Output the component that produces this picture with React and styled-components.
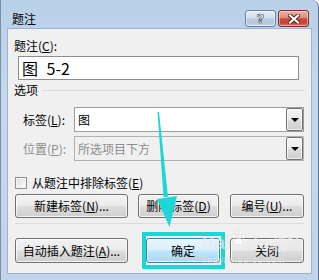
import React from 'react';
import styled, { createGlobalStyle } from 'styled-components';

const Global = createGlobalStyle`
  html, body { margin: 0; padding: 0; background: #ffffff; }
  body {
    font-family: "Noto Sans CJK SC", "Noto Sans", sans-serif;
    font-size: 12px;
    color: #000;
  }
  * { box-sizing: border-box; }
`;

const Window = styled.div`
  position: relative;
  width: 319px;
  height: 280px;
  display: flex;
  flex-direction: column;
  background: linear-gradient(180deg, #b9d0e9 0%, #c4d9ef 35%, #c0d5ec 100%);
  border-left: 1px solid #7c8ea4;
  border-right: 1px solid #5d718a;
  border-top-right-radius: 7px;
  overflow: hidden;
`;

const TitleBar = styled.div`
  height: 29px;
  flex: none;
  display: flex;
  align-items: flex-start;
  padding: 0 9px 0 11px;
`;

const Title = styled.div`
  margin-top: 11px;
  line-height: 16px;
  font-size: 12px;
`;

const Controls = styled.div`
  margin-left: auto;
  margin-top: 10px;
  display: flex;
  gap: 2px;
`;

const CaptionButton = styled.div`
  width: 31px;
  height: 17px;
  border-radius: 3px;
  display: flex;
  align-items: center;
  justify-content: center;
  border: 1px solid ${p => (p.$close ? '#7a2c25' : '#6f829d')};
  background: ${p =>
    p.$close
      ? 'linear-gradient(180deg, #eab0a3 0%, #dd8b7c 45%, #c8493c 52%, #c44236 80%, #d97769 100%)'
      : 'linear-gradient(180deg, #e6eef7 0%, #d2deed 45%, #bccde3 52%, #b4c7df 80%, #cbdaec 100%)'};
  box-shadow: inset 0 0 0 1px rgba(255, 255, 255, 0.45);
`;

const HelpGlyph = styled.span`
  font-family: "DejaVu Sans", sans-serif;
  font-weight: bold;
  font-size: 13px;
  line-height: 13px;
  color: #ffffff;
  -webkit-text-stroke: 0.7px #3f4e63;
`;

const Body = styled.div`
  flex: 1;
  margin: 0 7px 7px 7px;
  background: #f0f0f0;
  box-shadow: 0 0 0 1px #9fb4cc;
  display: flex;
  flex-direction: column;
`;

const Key = styled.span`
  text-decoration: underline;
  text-underline-offset: 1px;
`;

const CaptionLabel = styled.div`
  margin-top: 9px;
  padding-left: 6px;
  line-height: 16px;
`;

const TextBox = styled.div`
  margin: 2px 12px 0 10px;
  height: 24px;
  border: 1px solid #8b8d90;
  background: #ffffff;
  padding-left: 3px;
  font-size: 16px;
  line-height: 22px;
  word-spacing: 5px;
`;

const GroupHeader = styled.div`
  margin-top: 2px;
  height: 16px;
  display: flex;
  align-items: center;
  padding: 0 6px;
  line-height: 16px;
  &::after {
    content: '';
    flex: 1;
    height: 1px;
    margin-left: 4px;
    background: #d7dbdf;
  }
`;

const FieldRow = styled.div`
  margin-top: ${p => p.$gap}px;
  height: 25px;
  display: flex;
  align-items: center;
  padding: 0 7px 0 15px;
  color: ${p => (p.$disabled ? '#8d8d8d' : '#000')};
`;

const FieldLabel = styled.div`
  width: 51px;
  flex: none;
`;

const Combo = styled.div`
  flex: 1;
  height: 25px;
  display: flex;
  align-items: center;
  border: 1px solid ${p => (p.$disabled ? '#adb2b5' : '#9d9d9d')};
  background: ${p => (p.$disabled ? '#f0f0f0' : '#ffffff')};
  padding-left: 3px;
`;

const ComboValue = styled.div`
  flex: 1;
`;

const DropButton = styled.div`
  width: 17px;
  align-self: stretch;
  border: 1px solid #707070;
  border-radius: 2px;
  background: linear-gradient(180deg, #f4f4f4 0%, #ebebeb 48%, #dddddd 52%, #cdcdcd 100%);
  box-shadow: inset 0 0 0 1px rgba(255, 255, 255, 0.7);
  display: flex;
  align-items: center;
  justify-content: center;
  &::after {
    content: '';
    width: 0;
    height: 0;
    border-left: 4px solid transparent;
    border-right: 4px solid transparent;
    border-top: 4px solid #000;
  }
`;

const CheckRow = styled.div`
  margin-top: 14px;
  height: 16px;
  display: flex;
  align-items: center;
  padding-left: 7px;
  line-height: 16px;
`;

const CheckBox = styled.span`
  width: 12px;
  height: 12px;
  margin-right: 5px;
  border: 1px solid #8e8f8f;
  background: linear-gradient(135deg, #dcdcdc 0%, #f2f2f2 60%, #fdfdfd 100%);
  box-shadow: inset 0 0 0 1px #f6f6f6;
  flex: none;
`;

const ButtonRow = styled.div`
  margin-top: ${p => p.$gap}px;
  height: ${p => p.$h}px;
  display: flex;
  padding: 0 7px;
`;

const Button = styled.div`
  width: ${p => p.$w}px;
  height: 100%;
  margin-left: ${p => p.$ml || '0'};
  border: 1px solid ${p => (p.$primary ? '#3c7fb1' : '#707070')};
  border-radius: 3px;
  background: ${p =>
    p.$primary
      ? 'linear-gradient(180deg, #eaf6fd 0%, #d9f0fc 48%, #bee6fd 52%, #a7d9f5 100%)'
      : 'linear-gradient(180deg, #f2f2f2 0%, #ebebeb 48%, #dddddd 52%, #cfcfcf 100%)'};
  box-shadow: inset 0 0 0 1px rgba(255, 255, 255, 0.75);
  display: flex;
  align-items: center;
  justify-content: center;
  line-height: 16px;
  flex: none;
`;

const Highlight = styled.div`
  position: relative;
  display: flex;
  height: 100%;
  margin-left: auto;
  &::after {
    content: '';
    position: absolute;
    left: -4px;
    right: -5px;
    top: -6px;
    bottom: -6px;
    border: 4px solid #1dd6d6;
    pointer-events: none;
  }
`;

const Separator = styled.div`
  margin: 5px 7px 0;
  height: 1px;
  background: #d5dde4;
`;

const ArrowLayer = styled.svg`
  position: absolute;
  left: -1px;
  top: 0;
  width: 319px;
  height: 280px;
  pointer-events: none;
`;

const Watermark = styled.div`
  position: absolute;
  left: 201px;
  top: 229px;
  display: flex;
  flex-direction: column;
  align-items: flex-start;
  pointer-events: none;
  color: rgba(255, 255, 255, 0.6);
  text-shadow: 0 0 1px rgba(120, 120, 120, 0.25);
`;

const MarkLine = styled.div`
  display: flex;
  align-items: flex-end;
  font-family: "Liberation Sans", sans-serif;
  font-weight: bold;
  font-size: 18px;
  line-height: 22px;
`;

const MarkCjk = styled.span`
  font-family: "Noto Sans CJK SC", sans-serif;
  font-size: 15px;
  line-height: 21px;
  margin-left: 3px;
`;

const MarkUrl = styled.div`
  font-family: "Liberation Sans", sans-serif;
  font-size: 9px;
  line-height: 11px;
  letter-spacing: 0.6px;
  margin-top: 1px;
`;

function Paw() {
  return (
    <svg width="15" height="22" viewBox="0 0 16 24" style={{ margin: '0 1px 3px' }}>
      <g fill="rgba(255,255,255,0.65)" stroke="rgba(140,140,140,0.25)" strokeWidth="0.6">
        <ellipse cx="3" cy="8" rx="2" ry="2.6" />
        <ellipse cx="6.5" cy="3.5" rx="2" ry="2.6" />
        <ellipse cx="10.5" cy="3.5" rx="2" ry="2.6" />
        <ellipse cx="13.5" cy="8" rx="2" ry="2.6" />
        <path d="M8 9 C5 9 3 13 3 15 C3 17 5 17.5 8 17 C11 17.5 13 17 13 15 C13 13 11 9 8 9 Z" />
      </g>
    </svg>
  );
}

export default function App() {
  return (
    <>
      <Global />
      <Window>
        <TitleBar>
          <Title>题注</Title>
          <Controls>
            <CaptionButton>
              <HelpGlyph>?</HelpGlyph>
            </CaptionButton>
            <CaptionButton $close>
              <svg width="12" height="10" viewBox="0 0 12 10">
                <path d="M2 1.5 L10 8.5 M10 1.5 L2 8.5" stroke="#4a2520" strokeWidth="4" strokeLinecap="square" />
                <path d="M2 1.5 L10 8.5 M10 1.5 L2 8.5" stroke="#ffffff" strokeWidth="2.2" strokeLinecap="square" />
              </svg>
            </CaptionButton>
          </Controls>
        </TitleBar>
        <Body>
          <CaptionLabel>
            题注(<Key>C</Key>):
          </CaptionLabel>
          <TextBox>图 5-2</TextBox>
          <GroupHeader>选项</GroupHeader>
          <FieldRow $gap={9}>
            <FieldLabel>
              标签(<Key>L</Key>):
            </FieldLabel>
            <Combo>
              <ComboValue>图</ComboValue>
              <DropButton />
            </Combo>
          </FieldRow>
          <FieldRow $gap={4} $disabled>
            <FieldLabel>
              位置(<Key>P</Key>):
            </FieldLabel>
            <Combo $disabled>
              <ComboValue>所选项目下方</ComboValue>
              <DropButton />
            </Combo>
          </FieldRow>
          <CheckRow>
            <CheckBox />
            从题注中排除标签(<Key>E</Key>)
          </CheckRow>
          <ButtonRow $gap={3} $h={24}>
            <Button $w={113}>
              新建标签(<Key>N</Key>)...
            </Button>
            <Button $w={81} $ml="10px">
              删除标签(<Key>D</Key>)
            </Button>
            <Button $w={74} $ml="auto">
              编号(<Key>U</Key>)...
            </Button>
          </ButtonRow>
          <Separator />
          <ButtonRow $gap={14} $h={25}>
            <Button $w={113}>
              自动插入题注(<Key>A</Key>)...
            </Button>
            <Highlight>
              <Button $w={74} $primary>
                确定
              </Button>
            </Highlight>
            <Button $w={74} $ml="10px">
              关闭
            </Button>
          </ButtonRow>
        </Body>
        <Watermark>
          <MarkLine>
            Bai
            <Paw />
            du
            <MarkCjk>经验</MarkCjk>
          </MarkLine>
          <MarkUrl>jingyan.baidu.com</MarkUrl>
        </Watermark>
        <ArrowLayer viewBox="0 0 319 280">
          <polygon points="157.5,112 159,112 168,197 163.5,197" fill="#1dd6d6" />
          <polygon points="157,199 177,196 169.5,227" fill="#1dd6d6" />
        </ArrowLayer>
      </Window>
    </>
  );
}
